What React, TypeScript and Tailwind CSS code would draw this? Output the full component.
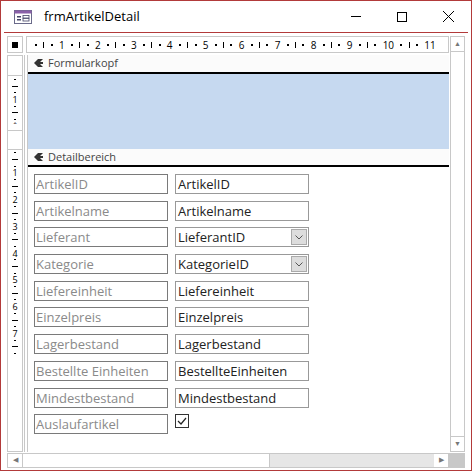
import React from "react";

const rows: [string, string, "text" | "combo" | "check"][] = [
  ["ArtikelID", "ArtikelID", "text"],
  ["Artikelname", "Artikelname", "text"],
  ["Lieferant", "LieferantID", "combo"],
  ["Kategorie", "KategorieID", "combo"],
  ["Liefereinheit", "Liefereinheit", "text"],
  ["Einzelpreis", "Einzelpreis", "text"],
  ["Lagerbestand", "Lagerbestand", "text"],
  ["Bestellte Einheiten", "BestellteEinheiten", "text"],
  ["Mindestbestand", "Mindestbestand", "text"],
  ["Auslaufartikel", "", "check"],
];

const Grip = () => (
  <svg width="10" height="9" viewBox="0 0 10 9" className="mr-1">
    <path d="M9 0 L4 0 L0 4 L4 8 L9 8 L6 5 L9 5 L9 3 L6 3 Z" fill="#333" />
  </svg>
);

const Ruler = () => {
  const items: React.ReactNode[] = [];
  for (let i = 1; i <= 11; i++) {
    items.push(
      <span key={i + "a"} className="w-[2px] h-[2px] bg-black" />,
      <span key={i + "b"} className="w-[1px] h-[6px] bg-black" />,
      <span key={i + "c"} className="w-[2px] h-[2px] bg-black" />,
      <span key={i} className="text-[10px] leading-none text-black">{i}</span>
    );
  }
  return <div className="flex items-center justify-between pl-[8px] pr-[12px] w-full">{items}</div>;
};

const Tick = ({ m }: { m: string }) => (
  <div className="h-[6.7px] flex items-center justify-center shrink-0">
    {m === "s" && <div className="w-[2px] h-[1px] bg-black" />}
    {m === "l" && <div className="w-[6px] h-[1px] bg-black" />}
    {m !== "s" && m !== "l" && <span className="text-[9px] leading-none">{m}</span>}
  </div>
);

const headMarks = ["", "", "s", "l", "s", "1", "s", "l", "s", "ˆ"];
const detailMarks = ["s", "l", "s", "1", "s", "l", "s", "2", "s", "l", "s", "3", "s", "l", "s", "4", "s", "l", "s", "5", "s", "l", "s", "6", "s", "l", "s", "7", "s", "l", "s"];

export default function App() {
  return (
    <div className="w-[472px] h-[471px] bg-white border border-[#b23a3a] flex flex-col" style={{ fontFamily: '"Open Sans", "Noto Sans", sans-serif' }}>
      <div className="h-[31px] flex items-center shrink-0">
        <svg width="18" height="14" viewBox="0 0 18 14" className="ml-[13px] mr-[12px]">
          <rect x="0.5" y="0.5" width="17" height="13" fill="#fff" stroke="#6a6a8a" />
          <rect x="0.5" y="0.5" width="17" height="3" fill="#8a5fa8" />
          <rect x="3" y="6" width="4" height="1.5" fill="#446" />
          <rect x="3" y="9" width="4" height="1.5" fill="#446" />
          <rect x="9" y="5.5" width="6" height="2.5" fill="#fff" stroke="#446" strokeWidth="0.8" />
          <rect x="9" y="8.5" width="6" height="2.5" fill="#fff" stroke="#446" strokeWidth="0.8" />
        </svg>
        <span className="text-[13px] text-black">frmArtikelDetail</span>
        <div className="ml-auto flex items-center h-full">
          <div className="w-[46px] flex justify-center"><div className="w-[10px] h-[1px] bg-black" /></div>
          <div className="w-[46px] flex justify-center"><div className="w-[10px] h-[10px] border border-black" /></div>
          <div className="w-[46px] flex justify-center">
            <svg width="11" height="11" viewBox="0 0 11 11"><path d="M0 0L11 11M11 0L0 11" stroke="#000" strokeWidth="1" /></svg>
          </div>
        </div>
      </div>
      <div className="mx-[3px] border-t border-[#b23a3a] flex-1 flex flex-col pt-[3px] pb-[2px] px-[3px] min-h-0">
        <div className="flex flex-1 min-h-0">
          <div className="flex-1 flex flex-col min-w-0">
            <div className="flex h-[17px] gap-[3px] shrink-0">
              <div className="w-[16px] border border-[#c8c8c8] flex items-center justify-center"><div className="w-[6px] h-[6px] bg-black" /></div>
              <div className="flex-1 border border-[#c8c8c8] flex items-center"><Ruler /></div>
            </div>
            <div className="flex flex-1 mt-[2px] min-h-0">
              <div className="w-[16px] border border-[#c8c8c8] flex flex-col overflow-hidden">
                <div className="h-[20px] border-b border-[#c8c8c8] shrink-0" />
                {headMarks.slice(2).map((m, i) => <Tick key={"h" + i} m={m} />)}
                <div className="h-[20px] border-t border-b border-[#c8c8c8] shrink-0" />
                {detailMarks.map((m, i) => <Tick key={"d" + i} m={m} />)}
              </div>
              <div className="w-[4px] border-l border-r border-[#c8c8c8] ml-[1px]" />
              <div className="flex-1 flex flex-col overflow-hidden">
                <div className="h-[19px] shrink-0 bg-[#fbfbfb] border-b-2 border-black flex items-center pl-[6px] text-[11px] text-[#444]"><Grip />Formularkopf</div>
                <div className="h-[75px] shrink-0 bg-[#c6d9f0]" />
                <div className="h-[18px] shrink-0 bg-[#fbfbfb] border-b-2 border-black flex items-center pl-[6px] text-[11px] text-[#444]"><Grip />Detailbereich</div>
                <div className="flex flex-col gap-[6.7px] pt-[7px] pl-[6px]">
                  {rows.map(([l, v, t]) => (
                    <div key={l} className="flex gap-[7px] h-[20px]">
                      <div className="w-[134px] border border-[#7a7a7a] text-[13px] leading-[18px] pl-[1px] text-[#8a8a8a]">{l}</div>
                      {t === "check" ? (
                        <div className="w-[14px] h-[14px] border border-[#333] flex items-center justify-center">
                          <svg width="10" height="8" viewBox="0 0 10 8"><path d="M1 4L4 7L9 1" stroke="#222" fill="none" strokeWidth="1.2" /></svg>
                        </div>
                      ) : (
                        <div className="w-[134px] border border-[#999] text-[13px] leading-[18px] pl-[2px] text-[#222] flex items-center">
                          <span className="flex-1">{v}</span>
                          {t === "combo" && (
                            <div className="w-[16px] h-[16px] bg-[#ddd] border border-[#aaa] mr-[1px] flex items-center justify-center">
                              <svg width="8" height="5" viewBox="0 0 8 5"><path d="M0.5 0.5L4 4L7.5 0.5" stroke="#555" fill="none" /></svg>
                            </div>
                          )}
                        </div>
                      )}
                    </div>
                  ))}
                </div>
              </div>
            </div>
          </div>
          <div className="w-[15px] ml-[1px] border border-[#c8c8c8] flex flex-col">
            <div className="h-[14px] flex items-center justify-center text-[7px] text-[#777]">▲</div>
            <div className="flex-1 border-t border-b border-[#c8c8c8] bg-white" />
            <div className="h-[14px] flex items-center justify-center text-[7px] text-[#777]">▼</div>
          </div>
        </div>
        <div className="flex h-[15px] mt-[1px] shrink-0">
          <div className="flex-1 flex border border-[#c8c8c8] bg-[#e6e6e6]">
            <div className="w-[14px] flex items-center justify-center text-[7px] text-[#777] bg-white">◀</div>
            <div className="w-[248px] bg-white border-l border-r border-[#c8c8c8]" />
            <div className="flex-1" />
            <div className="w-[14px] flex items-center justify-center text-[7px] text-[#777] bg-white">▶</div>
          </div>
          <div className="w-[16px] bg-[#c8c8c8]" />
        </div>
      </div>
    </div>
  );
}
